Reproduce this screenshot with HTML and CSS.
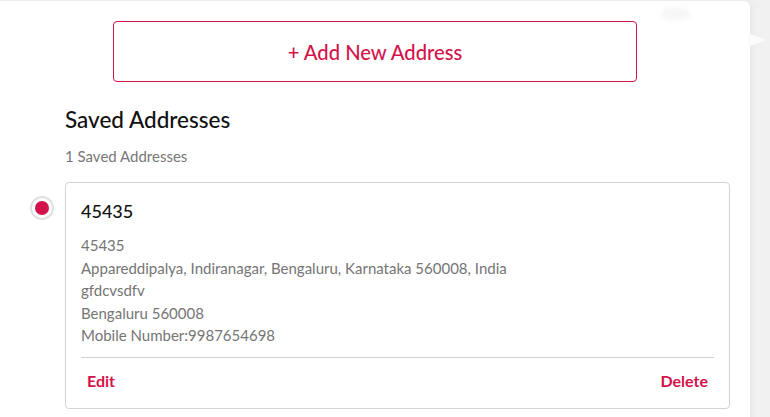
FILE: index.html
```html
<!DOCTYPE html>
<html lang="en">
<head>
<meta charset="utf-8">
<title>Saved Addresses</title>
<link rel="stylesheet" href="styles.css">
</head>
<body>
<div class="page">
  <main class="panel">
    <button class="add-btn" type="button">+ Add New Address</button>
    <section class="saved">
      <h2 class="saved-title">Saved Addresses</h2>
      <p class="saved-count">1 Saved Addresses</p>
      <div class="address-row">
        <span class="radio"><span class="radio-dot"></span></span>
        <div class="card">
          <div class="card-name">45435</div>
          <div class="card-body">
            <div>45435</div>
            <div>Appareddipalya, Indiranagar, Bengaluru, Karnataka 560008, India</div>
            <div>gfdcvsdfv</div>
            <div>Bengaluru 560008</div>
            <div>Mobile Number:9987654698</div>
          </div>
          <div class="card-actions">
            <span class="action">Edit</span>
            <span class="action">Delete</span>
          </div>
        </div>
      </div>
    </section>
    <span class="glint"></span>
  </main>
  <span class="pointer"></span>
</div>
</body>
</html>
```
FILE: styles.css
```css
* { box-sizing: border-box; }
html, body { margin: 0; padding: 0; }
body {
  background: #f1f1f1;
  font-family: Lato, "Noto Sans", sans-serif;
  height: 417px;
  overflow: hidden;
}
.page {
  position: relative;
  display: flex;
  padding-top: 1px;
}
.panel {
  position: relative;
  width: 750px;
  height: 430px;
  background: #fff;
  border-radius: 0 6px 0 0;
  box-shadow: 2px 0 8px rgba(0,0,0,0.05);
  padding-top: 20px;
}
.add-btn {
  display: block;
  margin-left: 113px;
  width: 524px;
  height: 61px;
  background: #fff;
  border: 1px solid #d4124a;
  border-radius: 4px;
  color: #d4124a;
  font-family: Lato, "Noto Sans", sans-serif;
  font-size: 20.2px;
  font-weight: 500;
  padding: 0;
}
.saved { padding-left: 30px; }
.saved-title {
  margin: 24px 0 0 35px;
  font-size: 22.5px;
  line-height: 28px;
  font-weight: 500;
  color: #111;
}
.saved-count {
  margin: 12px 0 0 35px;
  font-size: 15px;
  line-height: 20px;
  color: #777;
}
.address-row {
  display: flex;
  align-items: flex-start;
  gap: 11px;
  margin-top: 16px;
}
.radio {
  margin-top: 14px;
  width: 24px;
  height: 24px;
  border: 2px solid #e0e0e0;
  border-radius: 50%;
  display: flex;
  align-items: center;
  justify-content: center;
  flex: none;
}
.radio-dot {
  width: 14px;
  height: 14px;
  border-radius: 50%;
  background: #d4124a;
}
.card {
  width: 665px;
  border: 1px solid #d3d3d3;
  border-radius: 4px;
  padding: 16px 15px 16px 15px;
}
.card-name {
  font-size: 18px;
  line-height: 24px;
  color: #111;
  font-weight: 500;
}
.card-body {
  margin-top: 11px;
  font-size: 15px;
  line-height: 22.6px;
  color: #757575;
  padding-bottom: 10px;
  border-bottom: 1px solid #d0d0d0;
}
.card-actions {
  display: flex;
  justify-content: space-between;
  padding: 12px 6px 0 6px;
}
.action {
  color: #d4124a;
  font-size: 16px;
  line-height: 22px;
  font-weight: 700;
}
.glint {
  position: absolute;
  top: 6px;
  left: 660px;
  width: 30px;
  height: 14px;
  border-radius: 50%;
  background: #f7f7f7;
  filter: blur(2px);
}
.pointer {
  position: absolute;
  top: 33px;
  left: 748px;
  width: 0;
  height: 0;
  border-top: 7px solid transparent;
  border-bottom: 7px solid transparent;
  border-left: 18px solid #fbfbfb;
}
```
